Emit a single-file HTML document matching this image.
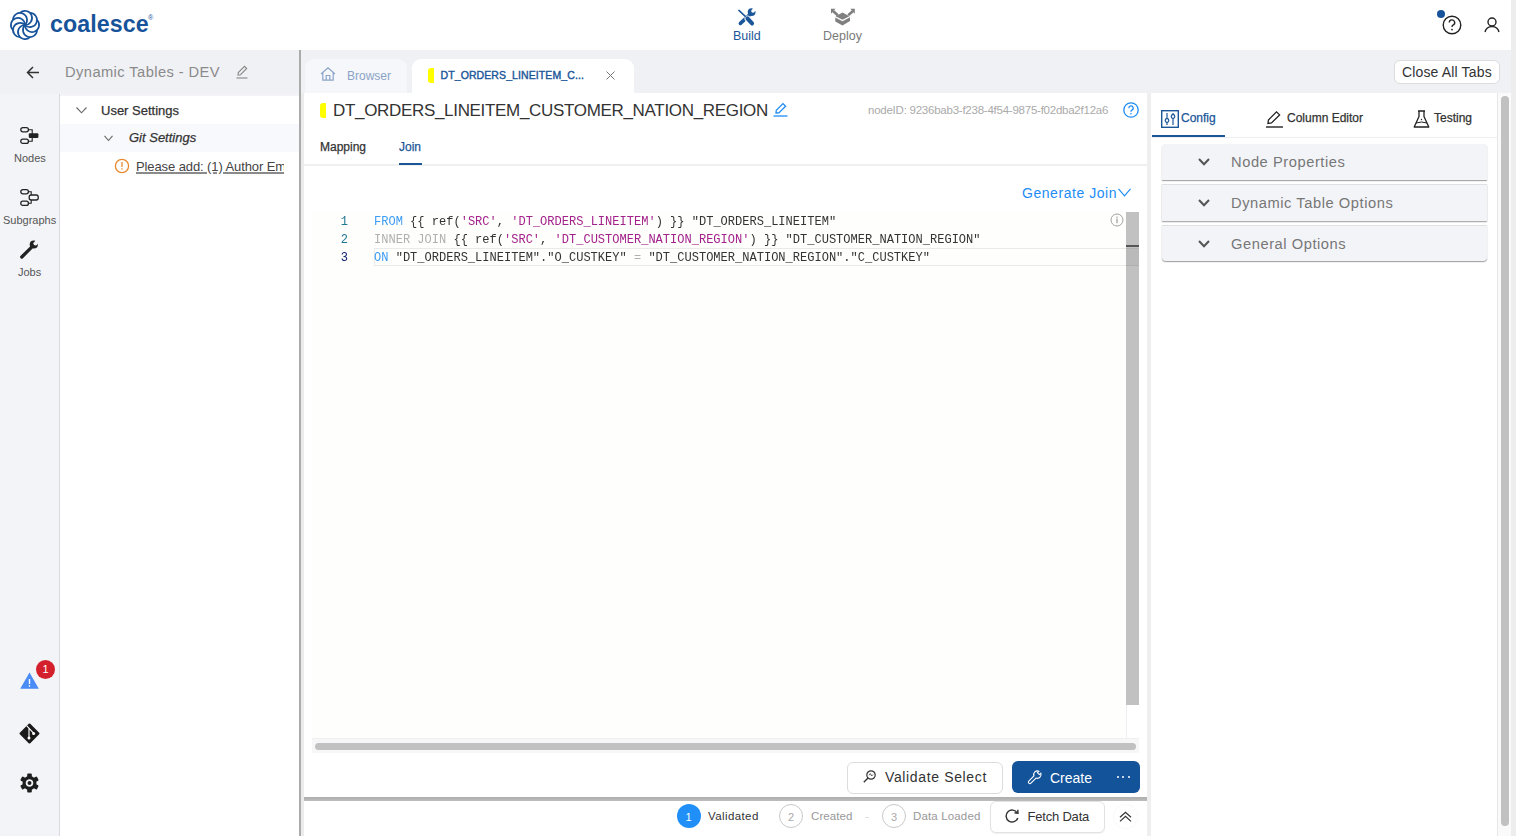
<!DOCTYPE html>
<html><head><meta charset="utf-8">
<style>
*{box-sizing:border-box;margin:0;padding:0}
html,body{width:1516px;height:836px;overflow:hidden;background:#fff;font-family:"Liberation Sans",sans-serif;color:#222}
.a{position:absolute}
.t{position:absolute;white-space:nowrap;line-height:1}
.med{-webkit-text-stroke:0.25px currentColor}
.mono{font-family:"Liberation Mono",monospace}
svg{display:block;position:absolute;overflow:visible}
</style></head>
<body>
<!-- ============ HEADER ============ -->
<div class="a" style="left:0;top:0;width:1512px;height:50px;background:#fff"></div>
<div class="a" style="left:1511px;top:0;width:5px;height:836px;background:#ededed"></div>

<!-- logo mark -->
<svg style="left:10px;top:10px" width="30" height="30" viewBox="-15 -15 30 30">
  <g fill="none" stroke="#17539a" stroke-width="1.7"><path d="M0 0 A7.05 7.05 0 1 0 12.04 -4.99"/><path d="M0 0 A7.05 7.05 0 1 0 12.04 4.99"/><path d="M0 0 A7.05 7.05 0 1 0 4.99 12.04"/><path d="M0 0 A7.05 7.05 0 1 0 -4.99 12.04"/><path d="M0 0 A7.05 7.05 0 1 0 -12.04 4.99"/><path d="M0 0 A7.05 7.05 0 1 0 -12.04 -4.99"/><path d="M0 0 A7.05 7.05 0 1 0 -4.99 -12.04"/><path d="M0 0 A7.05 7.05 0 1 0 4.99 -12.04"/></g>
</svg>
<div class="t" id="t_logo" style="left:50px;top:12.5px;font-size:23.2px;font-weight:bold;color:#17539a;letter-spacing:0.1px">coalesce</div>
<div class="t" style="left:148px;top:13.5px;font-size:7px;color:#17539a">&#174;</div>

<!-- Build -->
<svg style="left:730px;top:4px" width="32" height="26" viewBox="0 0 32 26">
  <defs><mask id="wm"><rect x="0" y="0" width="32" height="26" fill="#fff"/><circle cx="23" cy="7" r="1.8" fill="#000"/><path d="M22.2 6.2 L23.5 1.5 L29 5.5 L23.8 7.8 Z" fill="#000"/></mask></defs>
  <path d="M19.4 11 L10.4 19.4" stroke="#1b5699" stroke-width="3.6" stroke-linecap="round"/>
  <g mask="url(#wm)"><circle cx="21.6" cy="8.1" r="3.9" fill="#1b5699"/></g>
  <path d="M17.6 14.6 L22 19.4" stroke="#fff" stroke-width="6" stroke-linecap="round"/>
  <path d="M8.9 6.4 L15.6 12.6" stroke="#fff" stroke-width="2.6" stroke-linecap="round"/>
  <path d="M8.9 6.4 L15.6 12.6" stroke="#1b5699" stroke-width="1.5" stroke-linecap="round"/>
  <path d="M17.6 14.6 L22 19.4" stroke="#1b5699" stroke-width="4.2" stroke-linecap="round"/>
</svg>
<div class="t" id="t_build" style="left:733px;top:30px;font-size:12.5px;color:#1b5699">Build</div>
<!-- Deploy -->
<svg style="left:826px;top:4px" width="34" height="26" viewBox="0 0 34 26">
  <path d="M16.5 8.6 L23.4 12.3 L16.5 15.8 L9.6 12.3 Z" fill="#808080"/>
  <path d="M9.3 13.6 L16.5 17.2 L24 13.3 V17.1 L16.5 21.5 L9.3 17.4 Z" fill="#808080"/>
  <path d="M7 7 L11.8 11.2" stroke="#808080" stroke-width="2.6"/>
  <path d="M5 4.7 H9.5 L5 9.7 Z" fill="#808080"/>
  <path d="M27 7 L22.2 11.2" stroke="#808080" stroke-width="2.6"/>
  <path d="M28.8 4.7 H24.3 L28.8 9.7 Z" fill="#808080"/>
</svg>
<div class="t" id="t_deploy" style="left:823px;top:30px;font-size:12.5px;color:#7a7a7a">Deploy</div>

<!-- help / user -->
<div class="a" style="left:1437px;top:10px;width:8px;height:8px;border-radius:50%;background:#17539a"></div>
<svg style="left:1442px;top:15px" width="20" height="20" viewBox="0 0 20 20">
  <circle cx="10" cy="10" r="8.8" fill="none" stroke="#222" stroke-width="1.4"/>
  <path d="M7.3 7.6 A2.7 2.7 0 1 1 11 10.1 C10.2 10.5 10 11 10 12" fill="none" stroke="#222" stroke-width="1.4"/>
  <circle cx="10" cy="14.6" r="0.9" fill="#222"/>
</svg>
<svg style="left:1484px;top:17px" width="16" height="16" viewBox="0 0 16 16">
  <circle cx="8" cy="5" r="4" fill="none" stroke="#222" stroke-width="1.4"/>
  <path d="M1 15 A7.2 7 0 0 1 15 15" fill="none" stroke="#222" stroke-width="1.4"/>
</svg>

<!-- ============ LEFT RAIL ============ -->
<div class="a" style="left:0;top:50px;width:60px;height:786px;background:#f3f4f8"></div>
<div class="a" style="left:59px;top:94px;width:1px;height:742px;background:#d9dadd"></div>
<!-- sidebar header -->
<div class="a" style="left:0;top:50px;width:299px;height:44px;background:#f0f1f5"></div>
<svg style="left:26px;top:66px" width="14" height="13" viewBox="0 0 14 13">
  <path d="M13 6.5 H1.5 M7 1 L1.5 6.5 L7 12" fill="none" stroke="#333" stroke-width="1.5"/>
</svg>
<div class="t" id="t_dyn" style="left:65px;top:65.2px;font-size:14.7px;color:#8a8a8a;letter-spacing:0.42px">Dynamic Tables - DEV</div>
<svg style="left:235px;top:65px" width="14" height="14" viewBox="0 0 14 14">
  <path d="M3 10 L3.3 7.5 L9.5 1.3 L11.7 3.5 L5.5 9.7 Z" fill="none" stroke="#888" stroke-width="1.1"/>
  <path d="M1.5 13 H12.5" stroke="#888" stroke-width="1.1"/>
</svg>

<!-- rail icons -->
<svg style="left:20px;top:127px" width="19" height="17" viewBox="0 0 19 17">
  <rect x="0.8" y="0.6" width="7.6" height="4.2" rx="2" fill="none" stroke="#222" stroke-width="1.3"/>
  <rect x="0.8" y="12.2" width="7.6" height="4.2" rx="2" fill="none" stroke="#222" stroke-width="1.3"/>
  <rect x="8.8" y="6.2" width="9.6" height="4.8" rx="1" fill="#222"/>
  <path d="M8.4 2.7 H12.2 V14.3 H8.4" fill="none" stroke="#222" stroke-width="1.1"/>
</svg>
<div class="t" id="t_nodes" style="left:14px;top:153px;font-size:11px;color:#555">Nodes</div>
<svg style="left:20px;top:189px" width="19" height="17" viewBox="0 0 19 17">
  <rect x="0.8" y="0.6" width="7.6" height="4.2" rx="2" fill="none" stroke="#222" stroke-width="1.3"/>
  <rect x="0.8" y="12.2" width="7.6" height="4.2" rx="2" fill="none" stroke="#222" stroke-width="1.3"/>
  <rect x="9.2" y="6" width="9" height="5" rx="2" fill="none" stroke="#222" stroke-width="1.3"/>
  <path d="M8.4 2.7 H11.2 V6 M11.2 11 V14.3 H8.4" fill="none" stroke="#222" stroke-width="1.1"/>
</svg>
<div class="t" id="t_sub" style="left:3px;top:215px;font-size:11px;color:#555">Subgraphs</div>
<svg style="left:20px;top:240px" width="19" height="19" viewBox="0 0 19 19">
  <defs><mask id="jm"><rect x="-2" y="-2" width="23" height="23" fill="#fff"/><circle cx="15.5" cy="3.5" r="2.1" fill="#000"/><path d="M14.6 2.6 L16 -2 L22 2 L16.4 4.4 Z" fill="#000"/></mask></defs>
  <path d="M1.8 17 L11.2 7.6" stroke="#222" stroke-width="3.3" stroke-linecap="round"/>
  <g mask="url(#jm)"><circle cx="13.8" cy="4.5" r="4.1" fill="#222"/></g>
</svg>
<div class="t" id="t_jobs" style="left:18px;top:266.5px;font-size:11px;color:#555">Jobs</div>

<!-- warning triangle -->
<svg style="left:20px;top:672px" width="19" height="17" viewBox="0 0 19 17">
  <path d="M9.5 0.5 L18.8 16.8 H0.2 Z" fill="#4a8bf5"/>
  <rect x="8.8" y="7" width="1.4" height="5" fill="#fff"/>
  <rect x="8.8" y="13.2" width="1.4" height="1.5" fill="#fff"/>
</svg>
<div class="a" style="left:36px;top:659.5px;width:19px;height:19px;border-radius:50%;background:#d4202c"></div>
<div class="t" style="left:36px;top:663.5px;width:19px;text-align:center;font-size:11px;color:#fff">1</div>
<!-- git diamond -->
<svg style="left:19px;top:723px" width="21" height="21" viewBox="0 0 21 21">
  <path d="M10.5 1.6 L19.4 10.5 L10.5 19.4 L1.6 10.5 Z" fill="#1a1a1a" stroke="#1a1a1a" stroke-width="2.2" stroke-linejoin="round"/>
  <path d="M7.6 2.6 L14.8 10.4 M10 5.2 V15" stroke="#fff" stroke-width="1.15"/>
  <circle cx="10" cy="14.9" r="1.5" fill="#fff"/>
  <circle cx="14.6" cy="10.6" r="1.5" fill="#fff"/>
</svg>
<!-- gear -->
<svg style="left:20px;top:773px" width="19" height="20" viewBox="-9.5 -10 19 20">
  <g fill="#1e1e1e">
    <circle r="7"/>
    <rect x="-2.3" y="-9.5" width="4.6" height="19" rx="1"/>
    <rect x="-2.3" y="-9.5" width="4.6" height="19" rx="1" transform="rotate(60)"/>
    <rect x="-2.3" y="-9.5" width="4.6" height="19" rx="1" transform="rotate(120)"/>
  </g>
  <circle r="2.9" fill="none" stroke="#f3f4f8" stroke-width="1.8"/>
</svg>

<!-- ============ TREE ============ -->
<div class="a" style="left:60px;top:94px;width:239px;height:742px;background:#fff"></div>
<div class="a" style="left:60px;top:94px;width:239px;height:2px;background:#f4f4f8"></div>
<div class="a" style="left:60px;top:124px;width:239px;height:28px;background:#f8f9fc"></div>
<svg style="left:76px;top:107px" width="11" height="7" viewBox="0 0 11 7">
  <path d="M0.5 0.5 L5.5 5.8 L10.5 0.5" fill="none" stroke="#666" stroke-width="1.1"/>
</svg>
<div class="t med" id="t_us" style="left:101px;top:104px;font-size:13px;color:#333">User Settings</div>
<svg style="left:104px;top:135px" width="9" height="7" viewBox="0 0 9 7">
  <path d="M0.5 0.8 L4.5 5.5 L8.5 0.8" fill="none" stroke="#666" stroke-width="1.1"/>
</svg>
<div class="t med" id="t_git" style="left:129px;top:131px;font-size:13px;font-style:italic;color:#333">Git Settings</div>
<svg style="left:114px;top:158px" width="16" height="16" viewBox="0 0 16 16">
  <circle cx="8" cy="8" r="6.6" fill="none" stroke="#e8892e" stroke-width="1.3"/>
  <rect x="7.35" y="4" width="1.3" height="5" fill="#e8892e"/>
  <rect x="7.35" y="10.2" width="1.3" height="1.4" fill="#e8892e"/>
</svg>
<div class="a" style="left:136px;top:156px;width:148px;height:20px;overflow:hidden">
  <div class="t" id="t_please" style="left:0;top:3.7px;font-size:13px;color:#444;text-decoration:underline;text-decoration-color:#8a8a8a;text-decoration-thickness:1.6px;text-underline-offset:0.6px;letter-spacing:-0.1px">Please add: (1) Author Email</div>
</div>

<!-- divider -->
<div class="a" style="left:299px;top:50px;width:2px;height:786px;background:#ababab"></div>
<div class="a" style="left:301px;top:50px;width:3px;height:786px;background:#ececec"></div>

<!-- ============ TAB BAR ============ -->
<div class="a" style="left:301px;top:50px;width:1210px;height:43px;background:#f0f1f5"></div>
<div class="a" style="left:305px;top:59px;width:102px;height:34px;background:#f6f7fa;border-radius:9px 9px 0 0"></div>
<svg style="left:320px;top:67px" width="16" height="14" viewBox="0 0 16 14">
  <path d="M1 7 L8 0.8 L15 7 M2.8 5.5 V13.2 H13.2 V5.5 M6.2 13.2 V8.5 H9.8 V13.2" fill="none" stroke="#8aa4c8" stroke-width="1.2"/>
</svg>
<div class="t" id="t_browser" style="left:347px;top:70px;font-size:12px;color:#8aa4c8;letter-spacing:0px">Browser</div>
<div class="a" style="left:412px;top:59px;width:222px;height:35px;background:#fff;border-radius:9px 9px 0 0"></div>
<div class="a" style="left:427.5px;top:68px;width:6px;height:15px;background:#ffff00;border-radius:3px 0 0 3px"></div>
<div class="t med" id="t_tab" style="-webkit-text-stroke:0.4px #1b5699;left:440.5px;top:70px;font-size:10.5px;color:#1b5699;letter-spacing:0.1px">DT_ORDERS_LINEITEM_C...</div>
<svg style="left:606px;top:71px" width="9" height="9" viewBox="0 0 9 9">
  <path d="M0.5 0.5 L8.5 8.5 M8.5 0.5 L0.5 8.5" stroke="#777" stroke-width="1"/>
</svg>
<!-- close all tabs -->
<div class="a" style="left:1394px;top:59.5px;width:106px;height:24px;background:#fff;border:1px solid #dcdcdc;border-radius:6px"></div>
<div class="t" id="t_close" style="left:1402px;top:65px;font-size:14px;color:#333;letter-spacing:0.15px">Close All Tabs</div>

<!-- ============ MAIN ============ -->
<div class="a" style="left:304px;top:93px;width:843px;height:743px;background:#fff"></div>
<div class="a" style="left:320px;top:103px;width:6px;height:15px;background:#ffff00;border-radius:3px 0 0 3px"></div>
<div class="t" id="t_title" style="left:333px;top:102px;font-size:17px;color:#333;letter-spacing:-0.32px">DT_ORDERS_LINEITEM_CUSTOMER_NATION_REGION</div>
<svg style="left:773px;top:102.3px" width="15" height="15" viewBox="0 0 15 15">
  <path d="M3 11 L3.3 8.3 L10 1.6 L12.6 4.2 L5.9 10.9 Z" fill="none" stroke="#1e8cf5" stroke-width="1.3"/>
  <path d="M0.5 14 H14.5" stroke="#1e8cf5" stroke-width="1.3"/>
</svg>
<div class="t" id="t_nodeid" style="left:868px;top:105px;font-size:11.5px;color:#aaa;letter-spacing:-0.24px">nodeID: 9236bab3-f238-4f54-9875-f02dba2f12a6</div>
<svg style="left:1123px;top:102px" width="16" height="16" viewBox="0 0 16 16">
  <circle cx="8" cy="8" r="7.2" fill="none" stroke="#1e8cf5" stroke-width="1.3"/>
  <path d="M5.8 6.2 A2.2 2.2 0 1 1 8.8 8.2 C8.2 8.5 8 8.9 8 9.7" fill="none" stroke="#1e8cf5" stroke-width="1.3"/>
  <circle cx="8" cy="11.8" r="0.8" fill="#1e8cf5"/>
</svg>
<div class="t med" id="t_mapping" style="left:320px;top:141px;font-size:12px;color:#333">Mapping</div>
<div class="t med" id="t_join" style="left:399px;top:141px;font-size:12px;color:#1b5699">Join</div>
<div class="a" style="left:304px;top:164px;width:843px;height:2px;background:#f0f0f0"></div>
<div class="a" style="left:399px;top:162.5px;width:23px;height:2px;background:#1b5699"></div>

<div class="t" id="t_gen" style="left:1022px;top:186px;font-size:14px;color:#1e8cf5;letter-spacing:0.55px">Generate Join</div>
<svg style="left:1118px;top:188px" width="13" height="9" viewBox="0 0 13 9">
  <path d="M0.5 0.8 L6.5 7.8 L12.5 0.8" fill="none" stroke="#1e8cf5" stroke-width="1.2"/>
</svg>

<!-- editor -->
<div class="a" style="left:312px;top:212px;width:814px;height:527px;background:#fefefc"></div>
<div class="a" style="left:374px;top:248px;width:752px;height:18px;border:1px solid #eaeaea;border-right:none"></div>
<div class="mono t" style="left:320px;top:212.8px;width:28px;text-align:right;font-size:12.04px;line-height:18px;color:#237893;transform:scaleY(1.08);transform-origin:0 12.2px">1</div>
<div class="mono t" style="left:374px;top:212.8px;font-size:12.04px;line-height:18px;color:#333;white-space:pre;transform:scaleY(1.08);transform-origin:0 12.2px"><span style="color:#3d9cf5">FROM</span> {{ ref(<span style="color:#a3218a">'SRC'</span>, <span style="color:#a3218a">'DT_ORDERS_LINEITEM'</span>) }} "DT_ORDERS_LINEITEM"</div>
<div class="mono t" style="left:320px;top:230.8px;width:28px;text-align:right;font-size:12.04px;line-height:18px;color:#237893;transform:scaleY(1.08);transform-origin:0 12.2px">2</div>
<div class="mono t" style="left:374px;top:230.8px;font-size:12.04px;line-height:18px;color:#333;white-space:pre;transform:scaleY(1.08);transform-origin:0 12.2px"><span style="color:#b0b0b0">INNER JOIN</span> {{ ref(<span style="color:#a3218a">'SRC'</span>, <span style="color:#a3218a">'DT_CUSTOMER_NATION_REGION'</span>) }} "DT_CUSTOMER_NATION_REGION"</div>
<div class="mono t" style="left:320px;top:248.8px;width:28px;text-align:right;font-size:12.04px;line-height:18px;color:#0b216f;transform:scaleY(1.08);transform-origin:0 12.2px">3</div>
<div class="mono t" style="left:374px;top:248.8px;font-size:12.04px;line-height:18px;color:#333;white-space:pre;transform:scaleY(1.08);transform-origin:0 12.2px"><span style="color:#3d9cf5">ON</span> "DT_ORDERS_LINEITEM"."O_CUSTKEY" <span style="color:#b0b0b0">=</span> "DT_CUSTOMER_NATION_REGION"."C_CUSTKEY"</div>
<svg style="left:1110px;top:213px" width="14" height="14" viewBox="0 0 14 14">
  <circle cx="7" cy="7" r="6" fill="none" stroke="#999" stroke-width="0.9"/>
  <rect x="6.4" y="5.6" width="1.2" height="4.6" fill="#999"/>
  <rect x="6.4" y="3.6" width="1.2" height="1.2" fill="#999"/>
</svg>
<!-- editor vscroll -->
<div class="a" style="left:1126px;top:212px;width:13px;height:526px;background:#fff;border-left:1px solid #eee"></div>
<div class="a" style="left:1126px;top:212px;width:13px;height:493px;background:#c1c1c1"></div>
<div class="a" style="left:1126px;top:244.5px;width:13px;height:2px;background:#555"></div>
<div class="a" style="left:1126px;top:248px;width:13px;height:18px;border-top:1px solid rgba(0,0,0,0.05);border-bottom:1px solid rgba(0,0,0,0.05);background:rgba(0,0,0,0.03)"></div>
<!-- editor hscroll -->
<div class="a" style="left:312px;top:738px;width:827px;height:15px;background:#f7f7f7;border-top:1px solid #f0f0f0"></div>
<div class="a" style="left:315px;top:742.5px;width:821px;height:7.5px;background:#c1c1c1;border-radius:4px"></div>

<!-- buttons -->
<div class="a" style="left:847px;top:761.5px;width:156px;height:32px;background:#fff;border:1px solid #dcdcdc;border-radius:6px"></div>
<svg style="left:863px;top:770px" width="13" height="13" viewBox="0 0 13 13">
  <circle cx="8" cy="5" r="4.2" fill="none" stroke="#333" stroke-width="1.2"/>
  <path d="M5 8 L0.8 12.2" stroke="#333" stroke-width="1.4"/>
  <path d="M6 5.3 L7.3 3.5 L8.7 6 L10 4.5" fill="none" stroke="#333" stroke-width="0.8"/>
</svg>
<div class="t" id="t_val" style="left:885px;top:770px;font-size:14px;color:#333;letter-spacing:0.64px">Validate Select</div>
<div class="a" style="left:1011.5px;top:761px;width:128px;height:32px;background:#13539a;border-radius:6px"></div>
<svg style="left:1027px;top:770px" width="15" height="15" viewBox="0 0 15 15">
  <g transform="translate(1.8,13.2) rotate(-45) scale(1.15)"><path d="M1.3 -1.3 L7.6 -1.3 A3.3 3.3 0 0 1 13.6 -1.2 L11.8 -1.2 L11.8 1.2 L13.6 1.2 A3.3 3.3 0 0 1 7.6 1.3 L1.3 1.3 A1.3 1.3 0 0 1 1.3 -1.3 Z" fill="none" stroke="#fff" stroke-width="0.95"/></g>
</svg>
<div class="t" id="t_create" style="left:1050px;top:770.5px;font-size:14px;color:#fff;letter-spacing:0px">Create</div>
<div class="a" style="left:1116.6px;top:776.2px;width:2.1px;height:2.1px;background:#fff;border-radius:50%"></div>
<div class="a" style="left:1122.2px;top:776.2px;width:2.1px;height:2.1px;background:#fff;border-radius:50%"></div>
<div class="a" style="left:1127.5px;top:776.2px;width:2.1px;height:2.1px;background:#fff;border-radius:50%"></div>

<!-- bottom status bar -->
<div class="a" style="left:304px;top:797.2px;width:844px;height:4px;background:linear-gradient(#adadad,#bdbdbd)"></div>
<div class="a" style="left:676.5px;top:804.3px;width:24px;height:24px;border-radius:50%;background:#2090f8"></div>
<div class="t" style="left:676.5px;top:812.2px;width:24px;text-align:center;font-size:11px;color:#fff">1</div>
<div class="t" id="t_validated" style="left:708px;top:810.5px;font-size:11.5px;color:#333;letter-spacing:0.4px">Validated</div>
<div class="a" style="left:779px;top:804.3px;width:24px;height:24px;border-radius:50%;border:1px solid #c8c8c8"></div>
<div class="t" style="left:779px;top:812.2px;width:24px;text-align:center;font-size:11px;color:#aaa">2</div>
<div class="t" id="t_created" style="left:811px;top:811px;font-size:11.5px;color:#999;letter-spacing:0.1px">Created</div>
<div class="a" style="left:865px;top:816.5px;width:4px;height:1px;background:#ddd"></div>
<div class="a" style="left:882px;top:804.3px;width:24px;height:24px;border-radius:50%;border:1px solid #c8c8c8"></div>
<div class="t" style="left:882px;top:812.2px;width:24px;text-align:center;font-size:11px;color:#aaa">3</div>
<div class="t" id="t_loaded" style="left:913px;top:811px;font-size:11.5px;color:#999;letter-spacing:0.15px">Data Loaded</div>
<div class="a" style="left:990px;top:801px;width:115px;height:31.5px;background:#fff;border:1px solid #e2e2e2;border-radius:6px;box-shadow:0 1px 1px rgba(0,0,0,0.06)"></div>
<div class="a" style="left:1114px;top:805px;width:23px;height:23px;border-radius:50%;background:#fff;box-shadow:0 0 2px rgba(0,0,0,0.08)"></div>
<svg style="left:1005px;top:809px" width="14" height="14" viewBox="0 0 14 14">
  <path d="M12.3 4 A6 6 0 1 0 12.8 9" fill="none" stroke="#333" stroke-width="1.4"/>
  <path d="M9.5 3.8 L13 4.3 L12.8 0.8" fill="none" stroke="#333" stroke-width="1.4"/>
</svg>
<div class="t" id="t_fetch" style="left:1027.5px;top:810.2px;font-size:13px;color:#333;letter-spacing:-0.2px">Fetch Data</div>
<svg style="left:1119px;top:811px" width="13" height="12" viewBox="0 0 13 12">
  <path d="M1 6.2 L6.5 1.2 L12 6.2 M1 10.4 L6.5 5.4 L12 10.4" fill="none" stroke="#333" stroke-width="1.2"/>
</svg>

<!-- ============ RIGHT PANEL ============ -->
<div class="a" style="left:1147px;top:93px;width:4px;height:743px;background:#efefef"></div>
<div class="a" style="left:1151px;top:93px;width:346px;height:743px;background:#fff"></div>
<div class="a" style="left:1497px;top:93px;width:1px;height:743px;background:#e6e6e6"></div>
<div class="a" style="left:1498px;top:93px;width:13px;height:743px;background:#fafafa"></div>
<div class="a" style="left:1501px;top:96px;width:8px;height:730px;background:#c1c1c1;border-radius:4px"></div>

<!-- config tabs -->
<svg style="left:1161px;top:110px" width="18" height="18" viewBox="0 0 18 18">
  <rect x="0.7" y="0.7" width="16.6" height="16.6" fill="none" stroke="#1b5699" stroke-width="1.4"/>
  <path d="M6 3 V15 M12 3 V15" stroke="#1b5699" stroke-width="1.2"/>
  <circle cx="6" cy="10.5" r="1.8" fill="#fff" stroke="#1b5699" stroke-width="1.2"/>
  <circle cx="12" cy="6.5" r="1.8" fill="#fff" stroke="#1b5699" stroke-width="1.2"/>
</svg>
<div class="t med" id="t_config" style="left:1181px;top:112px;font-size:12px;color:#1b5699;letter-spacing:0px">Config</div>
<svg style="left:1265px;top:110px" width="19" height="18" viewBox="0 0 19 18">
  <path d="M3 13.5 L3.4 10 L11.5 1.8 L14.6 4.9 L6.5 13 Z" fill="none" stroke="#222" stroke-width="1.3"/>
  <path d="M1 17 H18" stroke="#222" stroke-width="1.4"/>
</svg>
<div class="t med" id="t_coled" style="left:1287px;top:112px;font-size:12px;color:#333;letter-spacing:0px">Column Editor</div>
<svg style="left:1413px;top:110px" width="17" height="18" viewBox="0 0 17 18">
  <path d="M5 1 H12 M6 1 V6.5 L1.2 17 H15.8 L11 6.5 V1" fill="none" stroke="#222" stroke-width="1.3" stroke-linejoin="round"/>
  <path d="M3 13 Q8.5 11 14 13" fill="none" stroke="#222" stroke-width="1"/>
  <circle cx="8.5" cy="9.5" r="0.7" fill="#222"/>
</svg>
<div class="t med" id="t_testing" style="left:1434px;top:112px;font-size:12px;color:#333;letter-spacing:0px">Testing</div>
<div class="a" style="left:1151px;top:136.5px;width:346px;height:1px;background:#eeeeee"></div>
<div class="a" style="left:1151.5px;top:135px;width:73px;height:2px;background:#1b5699"></div>

<!-- accordions -->
<div class="a" style="left:1161.5px;top:144px;width:325.5px;height:35.5px;background:#f3f4f8;border-radius:4px 4px 0 0;box-shadow:0 1px 1.2px rgba(0,0,0,0.4)"></div>
<div class="a" style="left:1161.5px;top:184px;width:325.5px;height:36.5px;background:#f3f4f8;border-top:1px solid #e0e0e2;box-shadow:0 1px 1.2px rgba(0,0,0,0.4)"></div>
<div class="a" style="left:1161.5px;top:225px;width:325.5px;height:36px;background:#f3f4f8;border-top:1px solid #e0e0e2;border-radius:0 0 4px 4px;box-shadow:0 1px 1.2px rgba(0,0,0,0.4)"></div>
<svg style="left:1197.5px;top:157.5px" width="12" height="8" viewBox="0 0 12 8">
  <path d="M1 1 L6 6.3 L11 1" fill="none" stroke="#555" stroke-width="2"/>
</svg>
<svg style="left:1197.5px;top:198.5px" width="12" height="8" viewBox="0 0 12 8">
  <path d="M1 1 L6 6.3 L11 1" fill="none" stroke="#555" stroke-width="2"/>
</svg>
<svg style="left:1197.5px;top:239.5px" width="12" height="8" viewBox="0 0 12 8">
  <path d="M1 1 L6 6.3 L11 1" fill="none" stroke="#555" stroke-width="2"/>
</svg>
<div class="t" id="t_np" style="letter-spacing:0.55px;left:1231px;top:155px;font-size:14.7px;color:#777">Node Properties</div>
<div class="t" id="t_dto" style="letter-spacing:0.55px;left:1231px;top:196px;font-size:14.7px;color:#777">Dynamic Table Options</div>
<div class="t" id="t_go" style="letter-spacing:0.55px;left:1231px;top:237px;font-size:14.7px;color:#777">General Options</div>


</body></html>
